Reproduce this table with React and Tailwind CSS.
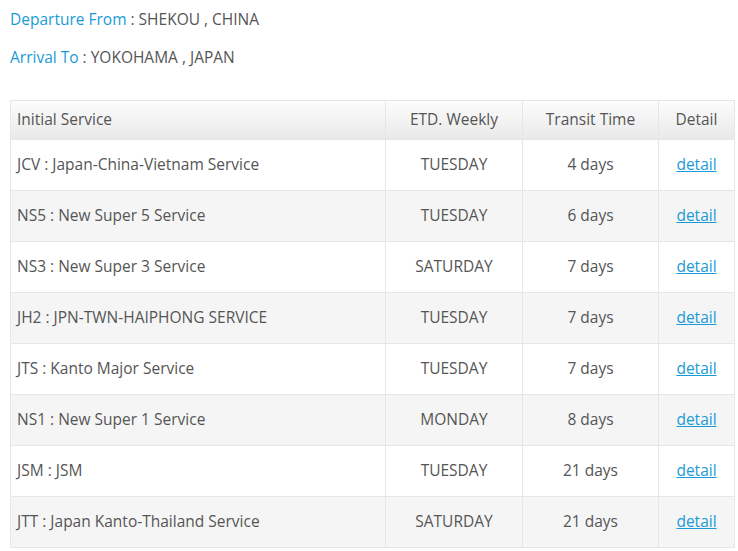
import React from "react";

const rows = [
  ["JCV : Japan-China-Vietnam Service", "TUESDAY", "4 days"],
  ["NS5 : New Super 5 Service", "TUESDAY", "6 days"],
  ["NS3 : New Super 3 Service", "SATURDAY", "7 days"],
  ["JH2 : JPN-TWN-HAIPHONG SERVICE", "TUESDAY", "7 days"],
  ["JTS : Kanto Major Service", "TUESDAY", "7 days"],
  ["NS1 : New Super 1 Service", "MONDAY", "8 days"],
  ["JSM : JSM", "TUESDAY", "21 days"],
  ["JTT : Japan Kanto-Thailand Service", "SATURDAY", "21 days"],
];

export default function App() {
  return (
    <div
      className="w-[738px] h-[551px] bg-white text-[#555] text-[15.5px] overflow-hidden"
      style={{ fontFamily: '"Open Sans", "Noto Sans", sans-serif' }}
    >
      <div className="pl-[10px] pt-[8px]">
        <div className="h-[22px] leading-[22px]">
          <span className="text-[#1a9bd7]">Departure From</span> : SHEKOU , CHINA
        </div>
        <div className="h-[22px] leading-[22px] mt-[16px]">
          <span className="text-[#1a9bd7]">Arrival To</span> : YOKOHAMA , JAPAN
        </div>
      </div>
      <div className="pl-[10px] pt-[32px]">
        <table className="w-[725px] border-collapse border border-[#e6e6e6]">
          <thead>
            <tr className="h-[39px] bg-gradient-to-b from-[#fcfcfc] to-[#e9e9e9]">
              <th className="font-normal text-left pl-[6px] border border-[#e6e6e6] w-[375px]">Initial Service</th>
              <th className="font-normal text-center border border-[#e6e6e6] w-[137px]">ETD. Weekly</th>
              <th className="font-normal text-center border border-[#e6e6e6] w-[136px]">Transit Time</th>
              <th className="font-normal text-center border border-[#e6e6e6]">Detail</th>
            </tr>
          </thead>
          <tbody>
            {rows.map((r, i) => (
              <tr key={i} className={`h-[51px] ${i % 2 === 1 ? "bg-[#f5f5f5]" : "bg-white"}`}>
                <td className="pl-[6px] border border-[#e6e6e6]">{r[0]}</td>
                <td className="text-center border border-[#e6e6e6]">{r[1]}</td>
                <td className="text-center border border-[#e6e6e6]">{r[2]}</td>
                <td className="text-center border border-[#e6e6e6]">
                  <a className="text-[#1a9bd7] underline" href="#">detail</a>
                </td>
              </tr>
            ))}
          </tbody>
        </table>
      </div>
    </div>
  );
}
